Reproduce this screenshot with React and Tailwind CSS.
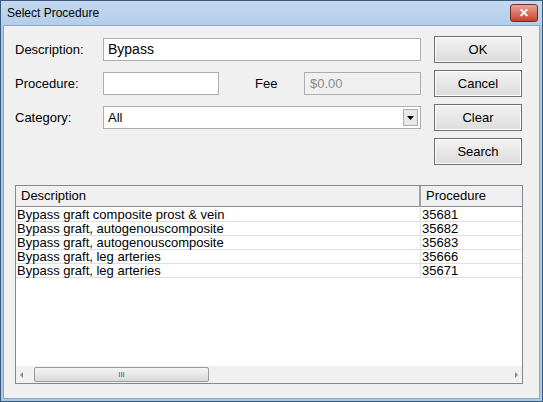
export default function App() {
  const f = { fontFamily: '"Liberation Sans", Arial, sans-serif' };
  const rows = [
    ["Bypass graft composite prost & vein", "35681"],
    ["Bypass graft, autogenouscomposite", "35682"],
    ["Bypass graft, autogenouscomposite", "35683"],
    ["Bypass graft, leg arteries", "35666"],
    ["Bypass graft, leg arteries", "35671"],
  ];
  const btn = "w-[88px] h-[27px] border border-[#707070] bg-gradient-to-b from-[#f2f2f2] to-[#dcdcdc] text-[13px] text-black flex items-center justify-center shadow-[inset_0_0_0_1px_#fcfcfc]";
  const inp = "h-[23px] border border-[#abadb3] bg-white text-[13px] flex items-center px-[4px]";
  return (
    <div style={f} className="w-[543px] h-[402px] bg-[#a9c9ea] border border-[#3c5a7a] flex flex-col text-black">
      <div className="h-[24px] flex items-center justify-between pl-[6px] pr-[4px] bg-gradient-to-b from-[#c4d9f1] to-[#b3cde9]">
        <span className="text-[12px]">Select Procedure</span>
        <div className="w-[28px] h-[18px] rounded-[3px] border border-[#7a2a22] bg-gradient-to-b from-[#e8a394] to-[#c4402b] flex items-center justify-center text-white text-[12px] font-bold">✕</div>
      </div>
      <div className="flex-1 mx-[2px] mb-[2px] border border-[#8ea7c2] bg-[#f0f0f0] flex flex-col px-[11px] pt-[10px]">
        <div className="flex">
          <div className="flex flex-col gap-[11px] w-[419px]">
            <div className="flex items-center h-[23px] mt-[2px]">
              <span className="w-[88px] text-[13px]">Description:</span>
              <div className={inp + " w-[318px] text-[14px]"}>Bypass</div>
            </div>
            <div className="flex items-center h-[23px]">
              <span className="w-[88px] text-[13px]">Procedure:</span>
              <div className={inp + " w-[116px]"}></div>
              <span className="ml-[36px] w-[49px] text-[13px]">Fee</span>
              <div className="h-[23px] w-[117px] border border-[#abadb3] bg-[#f0f0f0] text-[13px] text-[#8a8a8a] flex items-center px-[5px]">$0.00</div>
            </div>
            <div className="flex items-center h-[23px]">
              <span className="w-[88px] text-[13px]">Category:</span>
              <div className={inp + " w-[318px] justify-between pr-[2px]"}>
                <span>All</span>
                <div className="w-[15px] h-[17px] border border-[#abadb3] bg-[#e8e8e8] flex items-center justify-center">
                  <svg width="7" height="4"><path d="M0 0h7L3.5 4z" fill="#000" /></svg>
                </div>
              </div>
            </div>
          </div>
          <div className="flex flex-col gap-[7px]">
            {["OK", "Cancel", "Clear", "Search"].map((b) => (
              <div key={b} className={btn}>{b}</div>
            ))}
          </div>
        </div>
        <div className="mt-[20px] w-[508px] h-[199px] border border-[#828790] bg-white flex flex-col">
          <div className="flex h-[21px] border-b border-[#8e8e8e] bg-[#f0f0f0] text-[13px]">
            <div className="w-[405px] border-r-2 border-[#a0a0a0] pl-[5px] flex items-center">Description</div>
            <div className="pl-[5px] flex items-center">Procedure</div>
          </div>
          <div className="flex-1 pt-[1px]">
            {rows.map(([d, p], i) => (
              <div key={i} className="flex h-[14px] border-b border-[#e0e0e0] text-[13px] leading-[13px]">
                <div className="w-[405px] border-r border-[#e0e0e0] pl-[1px]">{d}</div>
                <div className="pl-[1px]">{p}</div>
              </div>
            ))}
          </div>
          <div className="h-[17px] bg-[#f0f0f0] flex items-center px-[2px]">
            <svg width="8" height="8"><path d="M5 1L2 4l3 3z" fill="#888" /></svg>
            <div className="ml-[8px] w-[175px] h-[15px] border border-[#9a9a9a] rounded-[2px] bg-gradient-to-b from-[#f4f4f4] to-[#dadada] flex items-center justify-center text-[8px] text-[#555]">III</div>
            <div className="flex-1" />
            <svg width="8" height="8"><path d="M3 1l3 3-3 3z" fill="#888" /></svg>
          </div>
        </div>
      </div>
    </div>
  );
}
